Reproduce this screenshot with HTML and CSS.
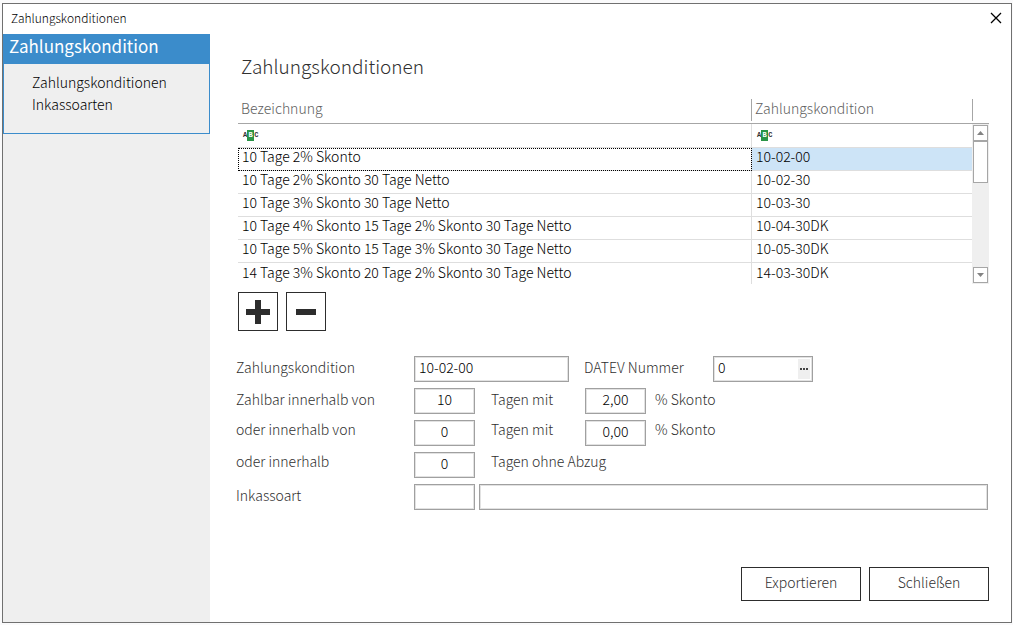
FILE: index.html
```
<!DOCTYPE html>
<html lang="de">
<head>
<meta charset="utf-8">
<meta name="viewport" content="width=device-width, initial-scale=1">
<title>Zahlungskonditionen</title>
<link rel="stylesheet" href="styles.css">
</head>
<body>
<div class="window">
  <header class="titlebar">
    <span class="titlebar-text">Zahlungskonditionen</span>
    <button type="button" class="close" aria-label="Fenster schließen">
      <svg width="12" height="12" viewBox="0 0 12 12"><path d="M1 1L11 11M11 1L1 11" stroke="#000" stroke-width="1.3" fill="none"/></svg>
    </button>
  </header>
  <div class="body">
    <aside class="sidebar">
      <nav class="group">
        <h2 class="group-title">Zahlungskondition</h2>
        <ul class="group-list">
          <li><a href="#konditionen">Zahlungskonditionen</a></li>
          <li><a href="#inkasso">Inkassoarten</a></li>
        </ul>
      </nav>
    </aside>
    <main class="main">
      <h1 class="title">Zahlungskonditionen</h1>
      <div class="grid">
        <div class="grid-view">
          <table class="table">
            <colgroup><col><col class="col-code"></colgroup>
            <thead>
              <tr><th scope="col"><div class="head">Bezeichnung</div></th><th scope="col"><div class="head">Zahlungskondition</div></th></tr>
            </thead>
            <tbody>
              <tr class="filter">
                <td><span class="abc"><span>A</span><span class="abc-mid">B</span><span>C</span></span></td>
                <td><span class="abc"><span>A</span><span class="abc-mid">B</span><span>C</span></span></td>
              </tr>
              <tr class="selected"><td>10 Tage 2% Skonto</td><td>10-02-00</td></tr>
              <tr><td>10 Tage 2% Skonto 30 Tage Netto</td><td>10-02-30</td></tr>
              <tr><td>10 Tage 3% Skonto 30 Tage Netto</td><td>10-03-30</td></tr>
              <tr><td>10 Tage 4% Skonto 15 Tage 2% Skonto 30 Tage Netto</td><td>10-04-30DK</td></tr>
              <tr><td>10 Tage 5% Skonto 15 Tage 3% Skonto 30 Tage Netto</td><td>10-05-30DK</td></tr>
              <tr><td>14 Tage 3% Skonto 20 Tage 2% Skonto 30 Tage Netto</td><td>14-03-30DK</td></tr>
            </tbody>
          </table>
        </div>
        <div class="grid-side">
          <div class="side-head"></div>
          <div class="scrollbar">
            <button type="button" class="scroll-btn" aria-label="Nach oben"><svg width="7" height="4" viewBox="0 0 7 4"><path d="M0 4L3.500 0L7 4Z" fill="#838383"/></svg></button>
            <div class="thumb"></div>
            <button type="button" class="scroll-btn scroll-down" aria-label="Nach unten"><svg width="7" height="4" viewBox="0 0 7 4"><path d="M0 0L3.500 4L7 0Z" fill="#838383"/></svg></button>
          </div>
        </div>
      </div>
      <div class="tools">
        <button type="button" class="tool" aria-label="Hinzufügen"><svg width="24" height="24" viewBox="0 0 24 24"><path d="M9 0H15V9H24V15H15V24H9V15H0V9H9Z" fill="#2d2d2d"/></svg></button>
        <button type="button" class="tool" aria-label="Entfernen"><svg width="24" height="24" viewBox="0 0 24 24"><path d="M2 9H22V15H2Z" fill="#2d2d2d"/></svg></button>
      </div>
      <form class="form">
        <div class="row">
          <label class="label" for="kond">Zahlungskondition</label>
          <input class="field wide" id="kond" value="10-02-00">
          <label class="datev" for="datev">DATEV Nummer</label>
          <div class="field picker">
            <input class="picker-input" id="datev" value="0">
            <button type="button" class="picker-btn" aria-label="Auswählen"><svg width="8" height="2" viewBox="0 0 8 2"><path d="M0 0H2V2H0ZM3 0H5V2H3ZM6 0H8V2H6Z" fill="#444"/></svg></button>
          </div>
        </div>
        <div class="row">
          <label class="label" for="t1">Zahlbar innerhalb von</label>
          <input class="field num" id="t1" value="10">
          <label class="mid" for="p1">Tagen mit</label>
          <input class="field num" id="p1" value="2,00">
          <span class="unit">% Skonto</span>
        </div>
        <div class="row alternative">
          <label class="label" for="t2">oder innerhalb von</label>
          <input class="field num" id="t2" value="0">
          <label class="mid" for="p2">Tagen mit</label>
          <input class="field num" id="p2" value="0,00">
          <span class="unit">% Skonto</span>
        </div>
        <div class="row alternative">
          <label class="label" for="t3">oder innerhalb</label>
          <input class="field num" id="t3" value="0">
          <span class="after">Tagen ohne Abzug</span>
        </div>
        <div class="row">
          <label class="label" for="ink">Inkassoart</label>
          <input class="field num" id="ink">
          <input class="field rest" aria-label="Bezeichnung der Inkassoart">
        </div>
      </form>
      <footer class="actions">
        <button type="button" class="btn">Exportieren</button>
        <button type="button" class="btn">Schließen</button>
      </footer>
    </main>
  </div>
</div>
</body>
</html>
```
FILE: styles.css
```
* { box-sizing: border-box; }
body {
  margin: 0;
  padding: 3px 1px 2px 2px;
  min-height: 100vh;
  display: flex;
  background: #fafafb;
  color: #303030;
  font: 300 14px/20px "Noto Sans CJK SC", "Noto Sans", sans-serif;
}
button, input { font: inherit; margin: 0; padding: 0; border-radius: 0; }
button { display: flex; align-items: center; justify-content: center; background: #fff; color: inherit; }
h1, h2, ul { margin: 0; padding: 0; font-weight: inherit; list-style: none; }

.window { flex: 1; display: flex; flex-direction: column; border: 1px solid #707070; background: #fff; }
.titlebar { display: flex; justify-content: space-between; align-items: center; height: 30px; padding: 0 9px 2px 8px; }
.titlebar-text { font-size: 12px; line-height: 16px; color: #000; }
.close { width: 12px; height: 12px; border: 0; }
.body { flex: 1; display: flex; }

.sidebar { width: 207px; flex: none; background: #efefef; }
.group { border: 1px solid #3b8ccb; min-height: 100px; }
.group-title { padding: 0 5px; height: 29px; background: #3b8ccb; color: #fff; font-size: 17px; font-weight: 400; line-height: 22px; }
.group-list { padding: 7px 0 0 28px; line-height: 22px; }
.group-list a { color: #000; text-decoration: none; }

.main { flex: 1; display: flex; flex-direction: column; padding: 18px 22px 21px 26px; }
.title { margin-left: 5px; font-size: 19px; line-height: 28px; }

.grid { display: flex; height: 186px; margin: 18px 0 0 2px; }
.grid-view { flex: 1; overflow: hidden; }
.table { width: 100%; table-layout: fixed; border-collapse: separate; border-spacing: 0; color: #000; }
.col-code { width: 220px; }
.table th { height: 26px; padding: 1px 0 2px; border-bottom: 1px solid #a6a6a6; text-align: left; font-weight: inherit; color: #606060; }
.head { height: 22px; padding-left: 3px; line-height: 18px; border-right: 1px solid #a6a6a6; }
.table th:last-child .head { border-right: 0; }
.table td { height: 23px; padding: 0 4px 6px; line-height: 16px; border-bottom: 1px solid #dedede; }
.table td:first-child { border-right: 1px solid #dedede; }
.table tr:last-child td { border-bottom: 0; }
.table .filter td { height: 24px; padding: 0 5px; }
.selected td:first-child { outline: 1px dotted #000; outline-offset: -1px; }
.selected td:last-child { background: #cde4f7; }
.abc { display: flex; align-items: center; color: #333; font: 700 7px/11px "Liberation Mono", monospace; }
.abc-mid { width: 7px; height: 11px; background: #2a9447; color: #fff; text-align: center; }

.grid-side { width: 17px; display: flex; flex-direction: column; }
.side-head { height: 26px; border-bottom: 1px solid #a6a6a6; background: linear-gradient(#a6a6a6, #a6a6a6) 0 1px / 1px 22px no-repeat; }
.scrollbar { flex: 1; display: flex; flex-direction: column; padding: 1px; background: #efefef; }
.scroll-btn { width: 15px; height: 16px; border: 1px solid #a6a6a6; }
.thumb { width: 15px; height: 42px; border: 1px solid #a6a6a6; background: #fff; }
.scroll-down { margin-top: auto; }

.tools { display: flex; gap: 8px; margin: 8px 0 0 2px; }
.tool { width: 40px; height: 39px; border: 1px solid #2d2d2d; }

.form { display: flex; flex-direction: column; gap: 6px; margin-top: 25px; }
.row { display: flex; align-items: center; line-height: 16px; }
.label, .datev, .mid, .after, .unit { padding-bottom: 4px; }
.alternative > :is(.label, .mid, .after, .unit) { padding-bottom: 8px; }
.label { width: 178px; }
.field { height: 26px; border: 1px solid #a0a0a0; background: #fff; box-shadow: inset 0 0 0 1px #e2e2e2; color: #000; padding: 0 4px 5px; }
.wide { width: 155px; }
.num { width: 61px; text-align: center; }
.rest { flex: 1; margin: 0 1px 0 4px; }
.datev { width: 144px; padding-left: 15px; }
.picker { width: 100px; display: flex; padding: 2px; }
.picker-input { flex: 1; min-width: 0; border: 0; padding: 0 2px 4px; background: none; color: #000; }
.picker-btn { width: 12px; border: 0; background: #efefef; }
.mid { width: 110px; padding-left: 16px; }
.after { padding-left: 16px; }
.unit { padding-left: 9px; }

.actions { display: flex; justify-content: flex-end; gap: 8px; margin-top: auto; }
.btn { width: 120px; height: 34px; padding-bottom: 5px; border: 1px solid #2d2d2d; }
```
